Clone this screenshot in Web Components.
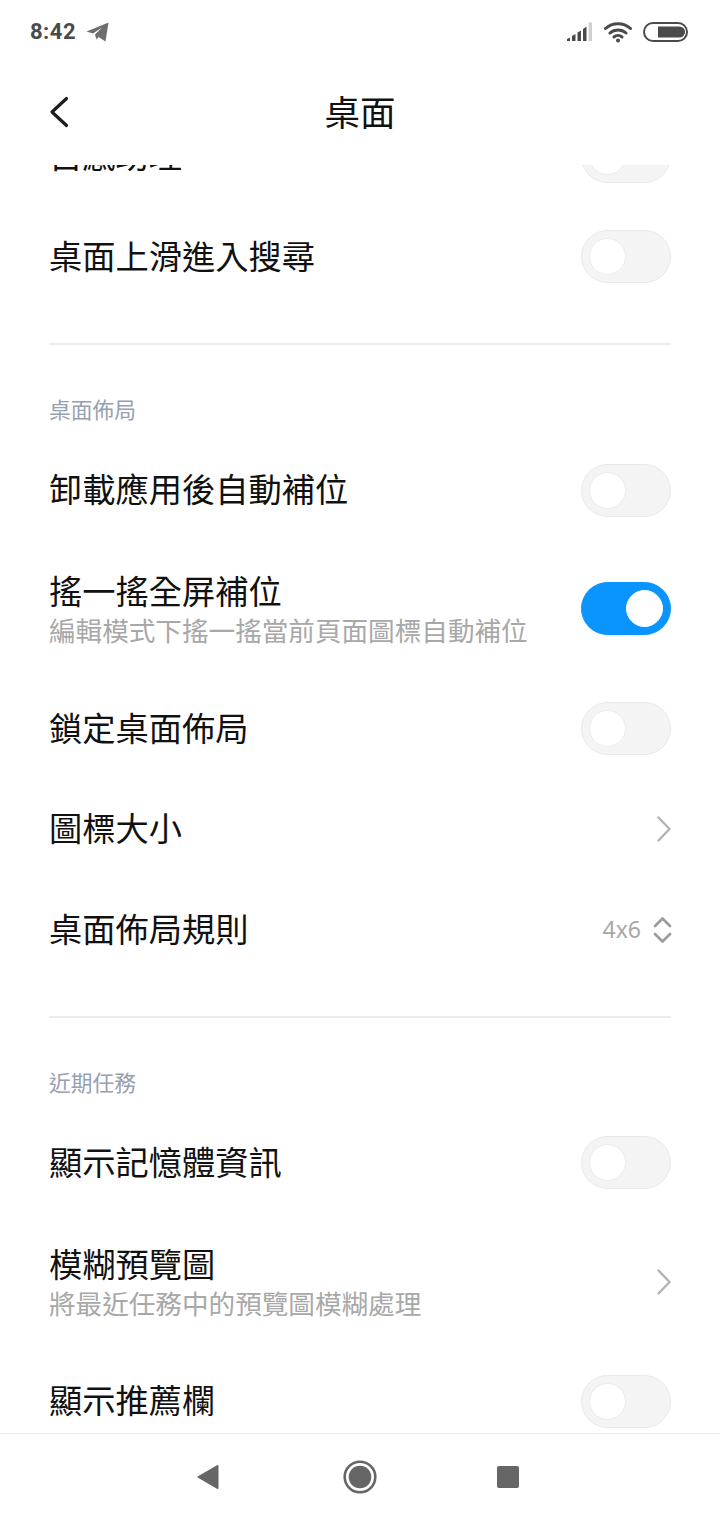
<!DOCTYPE html>
<html lang="zh-Hant">
<head>
<meta charset="utf-8">
<title>桌面</title>
<style>
  html, body { margin: 0; padding: 0; background: #fff; }
  body { font-family: "Noto Sans CJK TC", "Noto Sans", sans-serif; width: 720px; height: 1520px; overflow: hidden; }
  settings-page { height: 1520px; }
</style>
</head>
<body>
<settings-page>
  <status-bar slot="status"></status-bar>
  <title-bar slot="title">桌面</title-bar>

  <setting-row label="自感助理" style="margin-top:-59px"><toggle-switch></toggle-switch></setting-row>
  <setting-row label="桌面上滑進入搜尋"><toggle-switch></toggle-switch></setting-row>

  <section-head>桌面佈局</section-head>
  <setting-row label="卸載應用後自動補位"><toggle-switch></toggle-switch></setting-row>
  <setting-row label="搖一搖全屏補位" hint="編輯模式下搖一搖當前頁面圖標自動補位"><toggle-switch on></toggle-switch></setting-row>
  <setting-row label="鎖定桌面佈局"><toggle-switch></toggle-switch></setting-row>
  <setting-row label="圖標大小"><row-chevron></row-chevron></setting-row>
  <setting-row label="桌面佈局規則"><row-stepper>4x6</row-stepper></setting-row>

  <section-head>近期任務</section-head>
  <setting-row label="顯示記憶體資訊"><toggle-switch></toggle-switch></setting-row>
  <setting-row label="模糊預覽圖" hint="將最近任務中的預覽圖模糊處理"><row-chevron></row-chevron></setting-row>
  <setting-row label="顯示推薦欄"><toggle-switch></toggle-switch></setting-row>

  <nav-bar slot="nav"></nav-bar>
</settings-page>

<script>
class SettingsPage extends HTMLElement {
  constructor() {
    super();
    this.attachShadow({ mode: 'open' });
    this.shadowRoot.innerHTML = `
      <style>
        :host { display: flex; flex-direction: column; width: 720px; }
        .list { flex: 1; min-height: 0; overflow: hidden; }
      </style>
      <slot name="status"></slot>
      <slot name="title"></slot>
      <div class="list"><slot></slot></div>
      <slot name="nav"></slot>
    `;
  }
}

class StatusBar extends HTMLElement {
  constructor() {
    super();
    this.attachShadow({ mode: 'open' });
    this.shadowRoot.innerHTML = `
      <style>
        :host { display: flex; align-items: center; justify-content: space-between; height: 64px; padding: 0 31px 0 30px; box-sizing: border-box; }
        .left, .right { display: flex; align-items: center; }
        .time { font: 700 22px/1 Roboto, "Liberation Sans", sans-serif; color: #4a4a4a; letter-spacing: .5px; }
        .left svg { margin-left: 10px; }
        svg { display: block; }
      </style>
      <div class="left">
        <span class="time">8:42</span>
        <svg width="23" height="20" viewBox="0 0 23 20"><path d="M0.5 9.5 22.5 0.5 19.5 19.5 12.5 15 10.5 17.5 9 12.5 16 5.5 7 11.5Z" fill="#6e6e6e"/></svg>
      </div>
      <div class="right">
        <svg width="27" height="20" viewBox="0 0 27 20" style="margin-right:11px">
          <path d="M1 19V17L4 15.500V19Z M6 19V14L9.500 12V19Z M11.500 19V10.500L15 8.500V19Z M17 19V7L20.500 4.500V19Z" fill="#4a4a4a"/>
          <rect x="22.600" y="0.500" width="3.400" height="18.500" fill="#cfcfcf"/>
        </svg>
        <svg width="28" height="22" viewBox="0 0 28 22" style="margin-right:11px">
          <path d="M1.500 7.500C8.500 1 19.500 1 26.500 7.500M6 12C10.500 8 17.500 8 22 12M10 16C12.300 14 15.700 14 18 16" fill="none" stroke="#4a4a4a" stroke-width="3" stroke-linecap="round"/>
          <circle cx="14" cy="19.500" r="2" fill="#4a4a4a"/>
        </svg>
        <svg width="46" height="20" viewBox="0 0 46 20">
          <rect x="1" y="1" width="43" height="18" rx="9" fill="none" stroke="#4a4a4a" stroke-width="2"/>
          <path d="M15 4.500H36.500A5.500 5.500 0 0 1 36.500 15.500H15Z" fill="#4a4a4a"/>
        </svg>
      </div>
    `;
  }
}

class TitleBar extends HTMLElement {
  constructor() {
    super();
    this.attachShadow({ mode: 'open' });
    this.shadowRoot.innerHTML = `
      <style>
        :host { display: flex; align-items: center; justify-content: center; position: relative; height: 101px; flex: none; background: #fff; }
        .title { font-size: 35.500px; line-height: 1; color: #111; margin-top: -8px; }
        svg { position: absolute; left: 49px; top: 32px; }
      </style>
      <svg width="20" height="32" viewBox="0 0 20 32"><path d="M17.500 2.500 3 16 17.500 29.500" fill="none" stroke="#1c1c1c" stroke-width="3.200" stroke-linecap="round" stroke-linejoin="round"/></svg>
      <span class="title"><slot></slot></span>
    `;
  }
}

class SectionHead extends HTMLElement {
  constructor() {
    super();
    this.attachShadow({ mode: 'open' });
    this.shadowRoot.innerHTML = `
      <style>
        :host { display: block; margin: 36px 49px 0; padding-top: 52px; height: 42.750px; border-top: 2px solid #ececec; color: #95a1b1; font-size: 21.750px; line-height: 24px; }
      </style>
      <slot></slot>
    `;
  }
}

class SettingRow extends HTMLElement {
  constructor() {
    super();
    this.attachShadow({ mode: 'open' });
    const hint = this.getAttribute('hint');
    this.shadowRoot.innerHTML = `
      <style>
        :host { display: flex; align-items: center; justify-content: space-between; box-sizing: border-box; padding: 0 49px; min-height: ${hint ? 138 : 100.5}px; }
        .text { margin-bottom: ${hint ? 2 : 4}px; }
        .label { font-size: 33.250px; line-height: 40px; color: #111; white-space: nowrap; }
        .hint { font-size: 26.600px; line-height: 34px; color: #a8a8a8; margin-top: 3px; white-space: nowrap; }
      </style>
      <div class="text">
        <div class="label">${this.getAttribute('label')}</div>
        ${hint ? `<div class="hint">${hint}</div>` : ''}
      </div>
      <slot></slot>
    `;
  }
}

class ToggleSwitch extends HTMLElement {
  constructor() {
    super();
    this.attachShadow({ mode: 'open' });
    this.shadowRoot.innerHTML = `
      <style>
        :host { display: flex; align-items: center; box-sizing: border-box; width: 90px; height: 53px; padding: 0 7px; border: 1px solid #e9e9e9; border-radius: 27px; background: #f4f4f4; flex: none; }
        :host([on]) { justify-content: flex-end; background: #0a94fd; border-color: #0a94fd; margin-bottom: 2px; }
        .knob { width: 37px; height: 37px; border-radius: 50%; background: #fff; border: 1px solid #ebebeb; box-sizing: border-box; }
        :host([on]) .knob { border-color: #fff; }
      </style>
      <div class="knob"></div>
    `;
  }
}

class RowChevron extends HTMLElement {
  constructor() {
    super();
    this.attachShadow({ mode: 'open' });
    this.shadowRoot.innerHTML = `
      <style>
        :host { display: block; flex: none; width: 14px; height: 26px; margin-bottom: 1px; }
        svg { display: block; }
      </style>
      <svg width="14" height="26" viewBox="0 0 14 26"><path d="M1.500 1.500 12.500 13 1.500 24.500" fill="none" stroke="#b3b3b3" stroke-width="2.400" stroke-linecap="round" stroke-linejoin="round"/></svg>
    `;
  }
}

class RowStepper extends HTMLElement {
  constructor() {
    super();
    this.attachShadow({ mode: 'open' });
    this.shadowRoot.innerHTML = `
      <style>
        :host { display: flex; align-items: center; gap: 12px; flex: none; font: 23px/1 "Noto Sans", sans-serif; color: #a8a8a8; }
        svg { display: block; margin-right: -1px; }
      </style>
      <slot></slot>
      <svg width="19" height="28" viewBox="0 0 19 28"><path d="M2 10 9.500 2.500 17 10M2 18 9.500 25.500 17 18" fill="none" stroke="#9d9d9d" stroke-width="2.800" stroke-linecap="round" stroke-linejoin="round"/></svg>
    `;
  }
}

class NavBar extends HTMLElement {
  constructor() {
    super();
    this.attachShadow({ mode: 'open' });
    this.shadowRoot.innerHTML = `
      <style>
        :host { display: flex; align-items: center; justify-content: center; flex: none; height: 87px; border-top: 1px solid #ececec; box-sizing: border-box; background: #fff; padding: 0 4px 1px 0; }
        svg { display: block; }
        .back { margin-right: 124px; }
        .square { margin-left: 120px; }
      </style>
      <svg class="back" width="22" height="26" viewBox="0 0 22 26"><path d="M20.500 2 1.500 13 20.500 24Z" fill="#666" stroke="#666" stroke-width="2" stroke-linejoin="round"/></svg>
      <svg width="34" height="34" viewBox="0 0 34 34"><circle cx="17" cy="17" r="15.300" fill="none" stroke="#666" stroke-width="2.600"/><circle cx="17" cy="17" r="11.300" fill="#666"/></svg>
      <svg class="square" width="22" height="22" viewBox="0 0 22 22"><rect width="22" height="22" rx="2" fill="#666"/></svg>
    `;
  }
}

customElements.define('settings-page', SettingsPage);
customElements.define('status-bar', StatusBar);
customElements.define('title-bar', TitleBar);
customElements.define('section-head', SectionHead);
customElements.define('setting-row', SettingRow);
customElements.define('toggle-switch', ToggleSwitch);
customElements.define('row-chevron', RowChevron);
customElements.define('row-stepper', RowStepper);
customElements.define('nav-bar', NavBar);
</script>
</body>
</html>
